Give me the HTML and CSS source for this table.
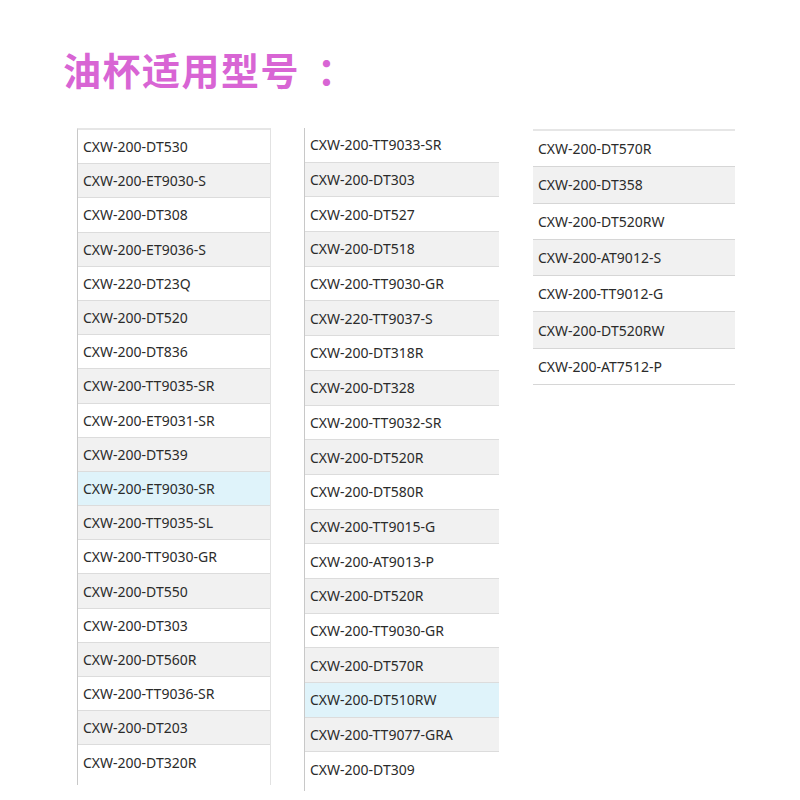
FILE: index.html
```html
<!DOCTYPE html>
<html lang="zh">
<head>
<meta charset="utf-8">
<link rel="stylesheet" href="styles.css">
</head>
<body>
<h1 class="title">油杯适用型号<span class="colon">：</span></h1>
<div class="cols">
  <div class="col col1">
    <div class="row">CXW-200-DT530</div>
    <div class="row">CXW-200-ET9030-S</div>
    <div class="row">CXW-200-DT308</div>
    <div class="row">CXW-200-ET9036-S</div>
    <div class="row">CXW-220-DT23Q</div>
    <div class="row">CXW-200-DT520</div>
    <div class="row">CXW-200-DT836</div>
    <div class="row">CXW-200-TT9035-SR</div>
    <div class="row">CXW-200-ET9031-SR</div>
    <div class="row">CXW-200-DT539</div>
    <div class="row hl">CXW-200-ET9030-SR</div>
    <div class="row">CXW-200-TT9035-SL</div>
    <div class="row">CXW-200-TT9030-GR</div>
    <div class="row">CXW-200-DT550</div>
    <div class="row">CXW-200-DT303</div>
    <div class="row">CXW-200-DT560R</div>
    <div class="row">CXW-200-TT9036-SR</div>
    <div class="row">CXW-200-DT203</div>
    <div class="row">CXW-200-DT320R</div>
  </div>
  <div class="col col2">
    <div class="row">CXW-200-TT9033-SR</div>
    <div class="row">CXW-200-DT303</div>
    <div class="row">CXW-200-DT527</div>
    <div class="row">CXW-200-DT518</div>
    <div class="row">CXW-200-TT9030-GR</div>
    <div class="row">CXW-220-TT9037-S</div>
    <div class="row">CXW-200-DT318R</div>
    <div class="row">CXW-200-DT328</div>
    <div class="row">CXW-200-TT9032-SR</div>
    <div class="row">CXW-200-DT520R</div>
    <div class="row">CXW-200-DT580R</div>
    <div class="row">CXW-200-TT9015-G</div>
    <div class="row">CXW-200-AT9013-P</div>
    <div class="row">CXW-200-DT520R</div>
    <div class="row">CXW-200-TT9030-GR</div>
    <div class="row">CXW-200-DT570R</div>
    <div class="row hl">CXW-200-DT510RW</div>
    <div class="row">CXW-200-TT9077-GRA</div>
    <div class="row">CXW-200-DT309</div>
  </div>
  <div class="col col3">
    <div class="row">CXW-200-DT570R</div>
    <div class="row">CXW-200-DT358</div>
    <div class="row">CXW-200-DT520RW</div>
    <div class="row">CXW-200-AT9012-S</div>
    <div class="row">CXW-200-TT9012-G</div>
    <div class="row">CXW-200-DT520RW</div>
    <div class="row">CXW-200-AT7512-P</div>
  </div>
</div>
</body>
</html>
```

FILE: styles.css
```css
html, body {
  margin: 0;
  padding: 0;
  background: #ffffff;
}

body {
  width: 800px;
  height: 800px;
  overflow: hidden;
  font-family: "Noto Sans", "Open Sans", sans-serif;
  color: #2b2b2b;
}

.title {
  margin: 0;
  padding: 50px 0 0 63px;
  height: 38px;
  font-family: "Noto Sans CJK SC", sans-serif;
  font-size: 38px;
  line-height: 38px;
  font-weight: 700;
  color: #d865d4;
  letter-spacing: 1.5px;
}

.title .colon {
  margin-left: 17px;
}

.cols {
  display: flex;
  align-items: flex-start;
  padding: 40px 0 0 77px;
}

.col {
  display: flex;
  flex-direction: column;
  box-sizing: border-box;
}

.row {
  box-sizing: border-box;
  display: flex;
  align-items: center;
  font-size: 14px;
  white-space: nowrap;
  border-bottom: 1px solid #dcdcdc;
  background: #ffffff;
}

.row:nth-child(even) {
  background: #f1f1f1;
}

.row.hl {
  background: #dff3fa;
}

.col1 {
  width: 194px;
  border-left: 1px solid #c8c8c8;
  border-right: 1px solid #e2e2e2;
  border-top: 2px solid #e6e6e6;
  padding-bottom: 5px;
}

.col1 .row {
  height: 34.2px;
  padding-left: 5px;
}

.col2 {
  width: 195px;
  margin-left: 33px;
  border-left: 1px solid #c8c8c8;
  padding-bottom: 4px;
}

.col2 .row {
  height: 34.7px;
  padding-left: 5px;
}

.col1 .row:last-child,
.col2 .row:last-child {
  border-bottom: none;
}

.col3 {
  width: 202px;
  margin-left: 34px;
  border-top: 2px solid #e6e6e6;
  margin-top: 1px;
}

.col3 .row {
  height: 36.3px;
  padding-left: 5px;
  border-bottom: 1px solid #d6d6d6;
}
```
